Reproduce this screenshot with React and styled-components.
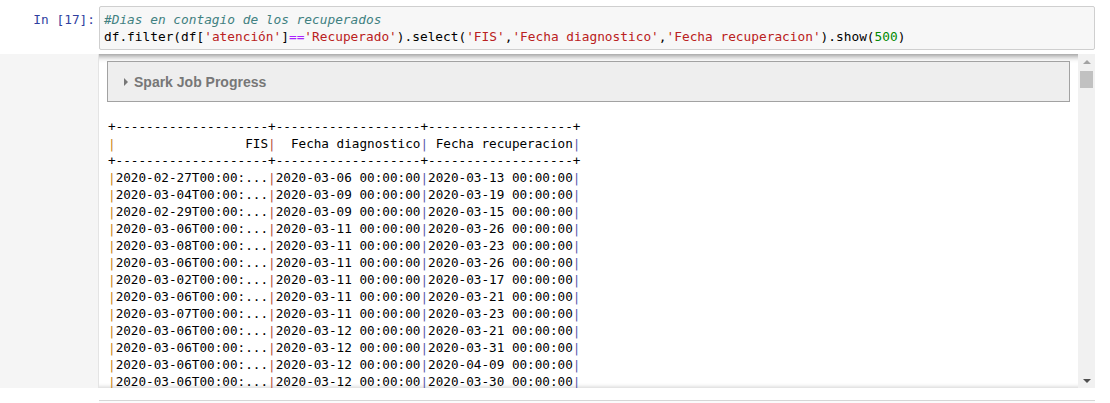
import styled, { createGlobalStyle } from "styled-components";

const GlobalStyle = createGlobalStyle`
  body {
    margin: 0;
    background: #ffffff;
    font-family: "Liberation Sans", Arial, sans-serif;
  }
`;

const mono = `"DejaVu Sans Mono", "Liberation Mono", monospace`;

const Notebook = styled.div`
  width: 1110px;
  height: 403px;
  overflow: hidden;
  padding-top: 6px;
  box-sizing: border-box;
`;

const InputRow = styled.div`
  display: flex;
  width: 1095px;
`;

const Prompt = styled.div`
  flex: 0 0 99px;
  box-sizing: border-box;
  padding: 5px 4px 0 0;
  text-align: right;
  font-family: ${mono};
  font-size: 12.8px;
  line-height: 17px;
  color: #303f9f;
`;

const InputArea = styled.pre`
  flex: 1;
  margin: 0;
  padding: 4px 4px;
  border: 1px solid #cfcfcf;
  border-radius: 2px;
  background: #f7f7f7;
  font-family: ${mono};
  font-size: 12.8px;
  line-height: 17px;
  color: #000;
`;

const Tok = styled.span`
  color: ${(p) => p.c};
  font-style: ${(p) => (p.i ? "italic" : "normal")};
`;

const OutputRow = styled.div`
  display: flex;
  width: 1095px;
  height: 334px;
  margin-top: 4px;
  position: relative;
  box-shadow: inset 0 7px 6px -5px rgba(0, 0, 0, 0.45),
    inset 0 -4px 4px -3px rgba(0, 0, 0, 0.18);
`;

const OutputPrompt = styled.div`
  flex: 0 0 98px;
  background: #f5f5f5;
  border-right: 1px solid #e4e4e4;
`;

const ScrollContent = styled.div`
  flex: 1;
  overflow: hidden;
  padding: 7px 8px 0 8px;
`;

const SparkBox = styled.div`
  height: 39px;
  border: 1px solid #a2a2a2;
  background: #eeeeee;
  display: flex;
  align-items: center;
  padding-left: 16px;
  gap: 6px;
  font-family: "Liberation Sans", Arial, sans-serif;
  font-weight: bold;
  font-size: 14px;
  color: #777777;
`;

const Caret = styled.span`
  width: 0;
  height: 0;
  border-top: 4px solid transparent;
  border-bottom: 4px solid transparent;
  border-left: 4px solid #777777;
  margin-top: 1px;
`;

const Table = styled.pre`
  margin: 16px 0 0 1px;
  font-family: ${mono};
  font-size: 12.66px;
  line-height: 17px;
  color: #000;
`;

const Pipe = styled.span`
  color: ${(p) => p.c};
`;

const Scrollbar = styled.div`
  flex: 0 0 17px;
  background: #f1f1f1;
  display: flex;
  flex-direction: column;
  align-items: center;
  padding-top: 6px;
  box-sizing: border-box;
`;

const Arrow = styled.span`
  width: 0;
  height: 0;
  border-left: 4px solid transparent;
  border-right: 4px solid transparent;
  ${(p) =>
    p.down
      ? `border-top: 4px solid #505050; margin-top: auto; margin-bottom: 5px;`
      : `border-bottom: 4px solid #a3a3a3;`}
`;

const Thumb = styled.div`
  width: 13px;
  height: 17px;
  margin-top: 7px;
  background: #c1c1c1;
`;

const NextCell = styled.div`
  margin: 12px 0 0 99px;
  width: 996px;
  height: 10px;
  border-top: 1px solid #d6d6d6;
  background: #fbfbfb;
`;

const rows = [
  ["2020-02-27", "2020-03-06", "2020-03-13"],
  ["2020-03-04", "2020-03-09", "2020-03-19"],
  ["2020-02-29", "2020-03-09", "2020-03-15"],
  ["2020-03-06", "2020-03-11", "2020-03-26"],
  ["2020-03-08", "2020-03-11", "2020-03-23"],
  ["2020-03-06", "2020-03-11", "2020-03-26"],
  ["2020-03-02", "2020-03-11", "2020-03-17"],
  ["2020-03-06", "2020-03-11", "2020-03-21"],
  ["2020-03-07", "2020-03-11", "2020-03-23"],
  ["2020-03-06", "2020-03-12", "2020-03-21"],
  ["2020-03-06", "2020-03-12", "2020-03-31"],
  ["2020-03-06", "2020-03-12", "2020-04-09"],
  ["2020-03-06", "2020-03-12", "2020-03-30"],
];

const pipeColors = ["#c98512", "#b4523a", "#5c5cae", "#5c5cae"];
const border = "+--------------------+-------------------+-------------------+";

function Line({ cells }) {
  return (
    <>
      <Pipe c={pipeColors[0]}>|</Pipe>
      {cells[0]}
      <Pipe c={pipeColors[1]}>|</Pipe>
      {cells[1]}
      <Pipe c={pipeColors[2]}>|</Pipe>
      {cells[2]}
      <Pipe c={pipeColors[3]}>|</Pipe>
      {"\n"}
    </>
  );
}

function App() {
  return (
    <Notebook>
      <GlobalStyle />
      <InputRow>
        <Prompt>In&nbsp;[17]:</Prompt>
        <InputArea>
          <Tok c="#408080" i>
            #Dias en contagio de los recuperados
          </Tok>
          {"\n"}df.filter(df[<Tok c="#ba2121">'atención'</Tok>]
          <Tok c="#aa22ff">==</Tok>
          <Tok c="#ba2121">'Recuperado'</Tok>).select(
          <Tok c="#ba2121">'FIS'</Tok>,<Tok c="#ba2121">'Fecha diagnostico'</Tok>,
          <Tok c="#ba2121">'Fecha recuperacion'</Tok>).show(
          <Tok c="#008800">500</Tok>)
        </InputArea>
      </InputRow>
      <OutputRow>
        <OutputPrompt />
        <ScrollContent>
          <SparkBox>
            <Caret />
            Spark Job Progress
          </SparkBox>
          <Table>
            {border + "\n"}
            <Line
              cells={[
                "                 FIS",
                "  Fecha diagnostico",
                " Fecha recuperacion",
              ]}
            />
            {border + "\n"}
            {rows.map((r, i) => (
              <Line
                key={i}
                cells={[`${r[0]}T00:00:...`, `${r[1]} 00:00:00`, `${r[2]} 00:00:00`]}
              />
            ))}
          </Table>
        </ScrollContent>
        <Scrollbar>
          <Arrow />
          <Thumb />
          <Arrow down />
        </Scrollbar>
      </OutputRow>
      <NextCell />
    </Notebook>
  );
}

export default App;
